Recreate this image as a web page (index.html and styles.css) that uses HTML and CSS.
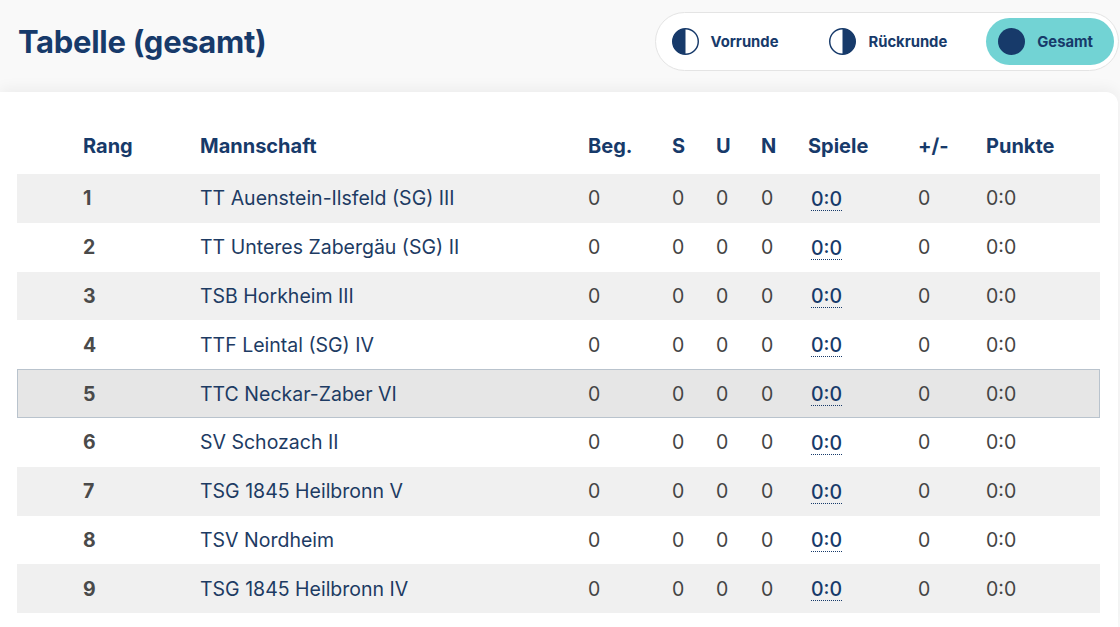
FILE: index.html
```html
<!DOCTYPE html>
<html lang="de">
<head>
<meta charset="utf-8">
<title>Tabelle (gesamt)</title>
<link rel="stylesheet" href="styles.css">
</head>
<body>
<header class="top">
  <h1 class="title">Tabelle (gesamt)</h1>
  <nav class="pill">
    <button class="seg">
      <svg class="ico" viewBox="0 0 26 26"><circle cx="13" cy="13" r="12.3" fill="#fff" stroke="#173a6a" stroke-width="1.4"/><path d="M13 0.7 A12.3 12.3 0 0 0 13 25.3 Z" fill="#173a6a"/></svg>
      <span>Vorrunde</span>
    </button>
    <button class="seg">
      <svg class="ico" viewBox="0 0 26 26"><circle cx="13" cy="13" r="12.3" fill="#fff" stroke="#173a6a" stroke-width="1.4"/><path d="M13 0.7 A12.3 12.3 0 0 1 13 25.3 Z" fill="#173a6a"/></svg>
      <span>Rückrunde</span>
    </button>
    <button class="seg active">
      <svg class="ico" viewBox="0 0 26 26"><circle cx="13" cy="13" r="13" fill="#173a6a"/></svg>
      <span>Gesamt</span>
    </button>
  </nav>
</header>
<main class="card">
  <div class="table">
    <div class="row head">
      <div>Rang</div><div>Mannschaft</div><div>Beg.</div><div>S</div><div>U</div><div>N</div><div>Spiele</div><div>+/-</div><div>Punkte</div>
    </div>
    <div class="row odd"><div class="rank">1</div><div class="team">TT Auenstein-Ilsfeld (SG) III</div><div>0</div><div>0</div><div>0</div><div>0</div><div><span class="games">0:0</span></div><div>0</div><div>0:0</div></div>
    <div class="row"><div class="rank">2</div><div class="team">TT Unteres Zabergäu (SG) II</div><div>0</div><div>0</div><div>0</div><div>0</div><div><span class="games">0:0</span></div><div>0</div><div>0:0</div></div>
    <div class="row odd"><div class="rank">3</div><div class="team">TSB Horkheim III</div><div>0</div><div>0</div><div>0</div><div>0</div><div><span class="games">0:0</span></div><div>0</div><div>0:0</div></div>
    <div class="row"><div class="rank">4</div><div class="team">TTF Leintal (SG) IV</div><div>0</div><div>0</div><div>0</div><div>0</div><div><span class="games">0:0</span></div><div>0</div><div>0:0</div></div>
    <div class="row mine"><div class="rank">5</div><div class="team">TTC Neckar-Zaber VI</div><div>0</div><div>0</div><div>0</div><div>0</div><div><span class="games">0:0</span></div><div>0</div><div>0:0</div></div>
    <div class="row"><div class="rank">6</div><div class="team">SV Schozach II</div><div>0</div><div>0</div><div>0</div><div>0</div><div><span class="games">0:0</span></div><div>0</div><div>0:0</div></div>
    <div class="row odd"><div class="rank">7</div><div class="team">TSG 1845 Heilbronn V</div><div>0</div><div>0</div><div>0</div><div>0</div><div><span class="games">0:0</span></div><div>0</div><div>0:0</div></div>
    <div class="row"><div class="rank">8</div><div class="team">TSV Nordheim</div><div>0</div><div>0</div><div>0</div><div>0</div><div><span class="games">0:0</span></div><div>0</div><div>0:0</div></div>
    <div class="row odd"><div class="rank">9</div><div class="team">TSG 1845 Heilbronn IV</div><div>0</div><div>0</div><div>0</div><div>0</div><div><span class="games">0:0</span></div><div>0</div><div>0:0</div></div>
  </div>
</main>
</body>
</html>
```
FILE: styles.css
```css
* { box-sizing: border-box; }
html, body { margin: 0; padding: 0; }
body {
  background: #f9f9f9;
  font-family: Inter, "Noto Sans", "Liberation Sans", sans-serif;
  color: #173a6a;
  height: 627px;
  overflow: hidden;
}
.top {
  height: 92px;
  display: flex;
  align-items: flex-start;
  justify-content: space-between;
  padding: 0 1px 0 18px;
}
.title {
  margin: 24px 0 0;
  font-size: 31px;
  font-weight: 700;
  letter-spacing: -0.3px;
  color: #173a6a;
  line-height: 36px;
}
.pill {
  margin-top: 12px;
  display: flex;
  gap: 18px;
  padding: 5px 4px;
  background: #fff;
  border: 1px solid #e4e4e4;
  border-radius: 30px;
}
.seg {
  display: flex;
  align-items: center;
  gap: 12px;
  height: 47px;
  padding: 0 21px 0 12px;
  border: 0;
  background: transparent;
  border-radius: 24px;
  font-family: inherit;
  font-size: 14.8px;
  font-weight: 700;
  color: #173a6a;
}
.seg.active { background: #72d3d4; }
.ico { width: 27px; height: 27px; display: block; }
.card {
  background: #fff;
  border-top-right-radius: 12px;
  margin-right: 2px;
  height: 535px;
  box-shadow: 0 -4px 14px rgba(0, 0, 0, 0.05);
  padding: 29px 18px 0 17px;
}
.row {
  display: grid;
  grid-template-columns: 117px 388px 84px 44px 45px 47px 110px 68px 1fr;
  align-items: center;
  height: 48.8px;
  padding-left: 66px;
  font-size: 19.5px;
  color: #444;
}
.row.head {
  height: 53px;
  font-size: 20px;
  font-weight: 700;
  color: #173a6a;
  padding-bottom: 3px;
}
.row.odd { background: #f0f0f0; }
.row.mine { background: #e6e6e6; border: 1px solid #b9c3cd; padding-left: 65px; }
.rank { font-weight: 700; color: #4a4a4a; }
.team { color: #1d3b63; }
.games {
  display: inline-block;
  margin-left: 3px;
  color: #173a6a;
  font-weight: 500;
  border-bottom: 1px dotted #173a6a;
  line-height: 22px;
  margin-top: 2px;
}
```
